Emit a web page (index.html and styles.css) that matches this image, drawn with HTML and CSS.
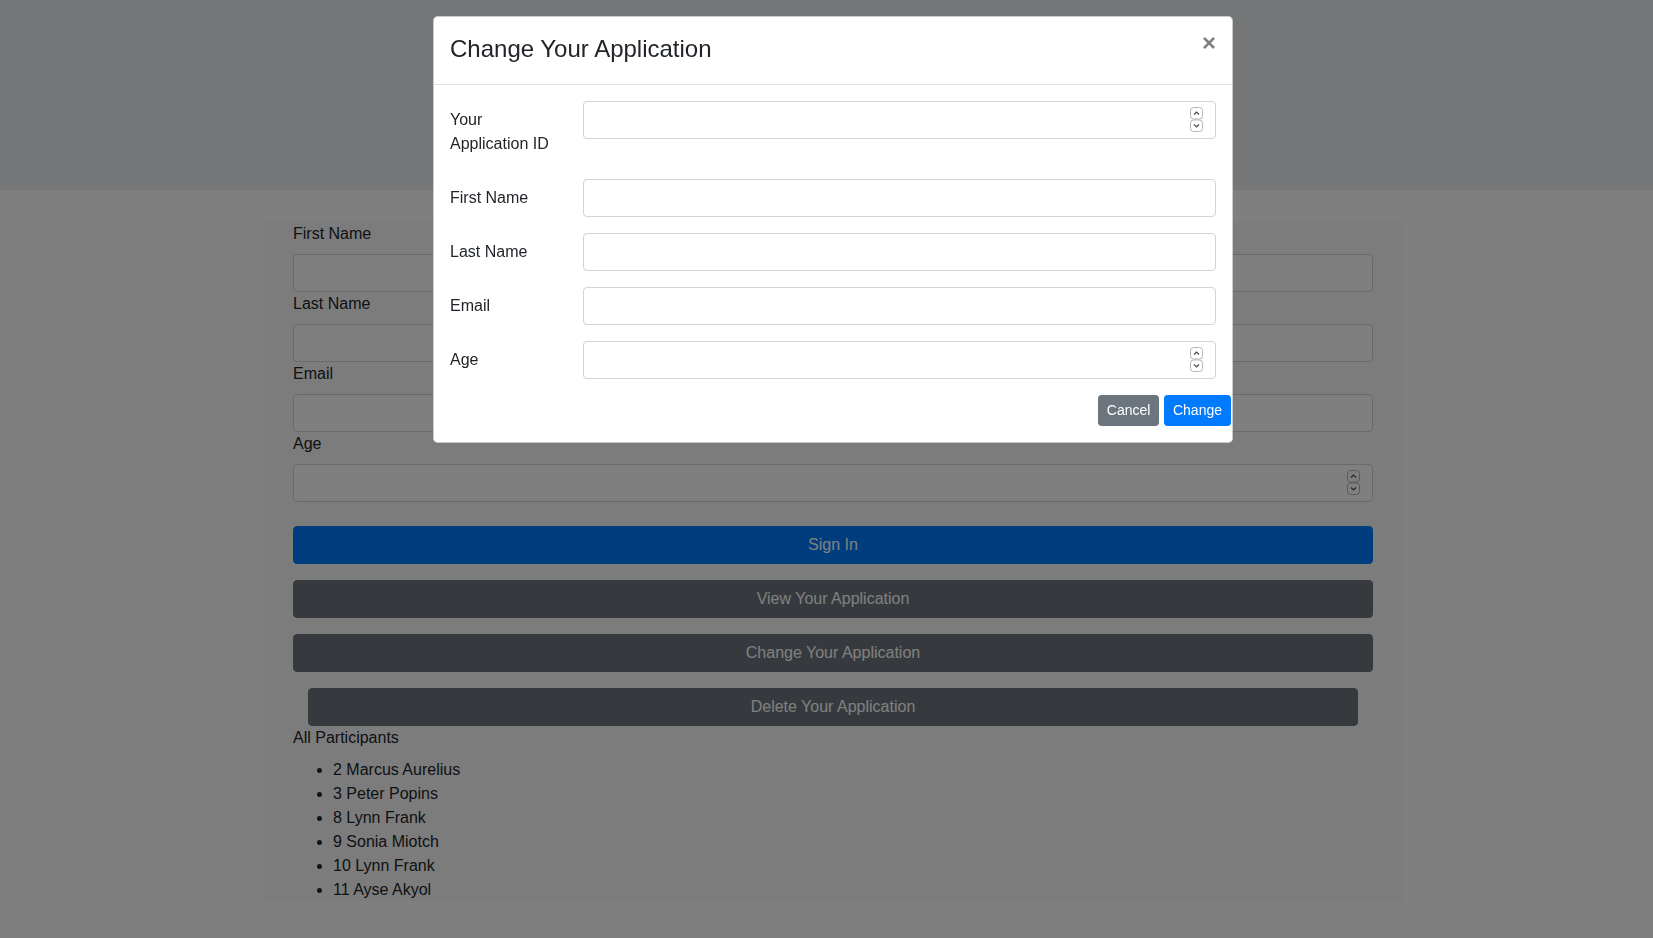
FILE: index.html
```html
<!DOCTYPE html>
<html lang="en">
<head>
<meta charset="utf-8">
<title>Applications</title>
<link rel="stylesheet" href="styles.css">
</head>
<body>
<div class="hero"></div>
<div class="page">
  <div class="container">
    <form class="signup">
      <label class="field-label">First Name</label>
      <input class="form-control" type="text">
      <label class="field-label">Last Name</label>
      <input class="form-control" type="text">
      <label class="field-label">Email</label>
      <input class="form-control" type="text">
      <label class="field-label">Age</label>
      <div class="num-wrap">
        <input class="form-control" type="number">
        <svg class="spin" width="13" height="25" viewBox="0 0 13 25" aria-hidden="true">
          <rect x="0.5" y="0.5" width="12" height="11.5" rx="3" fill="#fff" stroke="#b5b5b5"/>
          <polyline points="4,7.5 6.5,5 9,7.5" fill="none" stroke="#4a4a4a" stroke-width="1.2"/>
          <rect x="0.5" y="13" width="12" height="11.5" rx="3" fill="#fff" stroke="#b5b5b5"/>
          <polyline points="4,17.5 6.5,20 9,17.5" fill="none" stroke="#4a4a4a" stroke-width="1.2"/>
        </svg>
      </div>
      <div class="actions">
        <button type="button" class="btn btn-block btn-primary">Sign In</button>
        <button type="button" class="btn btn-block btn-secondary">View Your Application</button>
        <button type="button" class="btn btn-block btn-secondary">Change Your Application</button>
        <button type="button" class="btn btn-block btn-secondary btn-inset">Delete Your Application</button>
      </div>
    </form>
    <div class="list-title">All Participants</div>
    <ul class="participants">
      <li>2 Marcus Aurelius</li>
      <li>3 Peter Popins</li>
      <li>8 Lynn Frank</li>
      <li>9 Sonia Miotch</li>
      <li>10 Lynn Frank</li>
      <li>11 Ayse Akyol</li>
    </ul>
  </div>
</div>

<div class="backdrop">
  <div class="modal">
    <div class="modal-header">
      <h4 class="modal-title">Change Your Application</h4>
      <span class="close">&times;</span>
    </div>
    <div class="modal-body">
      <div class="form-row">
        <label class="row-label">Your Application ID</label>
        <div class="num-wrap">
          <input class="form-control" type="number">
          <svg class="spin" width="13" height="25" viewBox="0 0 13 25" aria-hidden="true">
            <rect x="0.5" y="0.5" width="12" height="11.5" rx="3" fill="#fff" stroke="#b5b5b5"/>
            <polyline points="4,7.5 6.5,5 9,7.5" fill="none" stroke="#4a4a4a" stroke-width="1.2"/>
            <rect x="0.5" y="13" width="12" height="11.5" rx="3" fill="#fff" stroke="#b5b5b5"/>
            <polyline points="4,17.5 6.5,20 9,17.5" fill="none" stroke="#4a4a4a" stroke-width="1.2"/>
          </svg>
        </div>
      </div>
      <div class="form-row">
        <label class="row-label">First Name</label>
        <input class="form-control" type="text">
      </div>
      <div class="form-row">
        <label class="row-label">Last Name</label>
        <input class="form-control" type="text">
      </div>
      <div class="form-row">
        <label class="row-label">Email</label>
        <input class="form-control" type="text">
      </div>
      <div class="form-row">
        <label class="row-label">Age</label>
        <div class="num-wrap">
          <input class="form-control" type="number">
          <svg class="spin" width="13" height="25" viewBox="0 0 13 25" aria-hidden="true">
            <rect x="0.5" y="0.5" width="12" height="11.5" rx="3" fill="#fff" stroke="#b5b5b5"/>
            <polyline points="4,7.5 6.5,5 9,7.5" fill="none" stroke="#4a4a4a" stroke-width="1.2"/>
            <rect x="0.5" y="13" width="12" height="11.5" rx="3" fill="#fff" stroke="#b5b5b5"/>
            <polyline points="4,17.5 6.5,20 9,17.5" fill="none" stroke="#4a4a4a" stroke-width="1.2"/>
          </svg>
        </div>
      </div>
      <div class="modal-actions">
        <button type="button" class="btn btn-sm btn-secondary">Cancel</button>
        <button type="button" class="btn btn-sm btn-primary">Change</button>
      </div>
    </div>
  </div>
</div>
</body>
</html>
```

FILE: styles.css
```css
* { box-sizing: border-box; }

html, body {
  margin: 0;
  padding: 0;
}

body {
  font-family: "Liberation Sans", Arial, Helvetica, sans-serif;
  font-size: 16px;
  line-height: 1.5;
  color: #212529;
  background: #fff;
  height: 938px;
  overflow: hidden;
}

.hero {
  height: 190px;
  background: #e9ecef;
}

.page {
  padding-left: 13px;
}

.container {
  width: 1140px;
  margin: 32px auto 0;
  background: #f8f9fa;
  padding: 0 30px;
}

.signup {
  display: flex;
  flex-direction: column;
}

.field-label {
  display: block;
  margin-bottom: 8px;
  line-height: 24px;
}

.form-control {
  display: block;
  width: 100%;
  height: 38px;
  padding: 6px 12px;
  font-family: inherit;
  font-size: 16px;
  line-height: 24px;
  color: #495057;
  background: #fff;
  border: 1px solid #ced4da;
  border-radius: 4px;
  margin: 0;
  -moz-appearance: textfield;
}

.form-control::-webkit-inner-spin-button,
.form-control::-webkit-outer-spin-button {
  -webkit-appearance: none;
  margin: 0;
}

.num-wrap {
  position: relative;
}

.spin {
  position: absolute;
  right: 13px;
  top: 6px;
  display: block;
}

.actions {
  display: flex;
  flex-direction: column;
  gap: 16px;
  margin-top: 24px;
}

.btn {
  display: inline-block;
  font-family: inherit;
  font-size: 16px;
  line-height: 24px;
  padding: 6px 12px;
  border: 1px solid transparent;
  border-radius: 4px;
  color: #fff;
  text-align: center;
  cursor: pointer;
}

.btn-block {
  width: 100%;
  height: 38px;
}

.btn-inset {
  width: auto;
  margin: 0 15px;
}

.btn-primary {
  background: #007bff;
  border-color: #007bff;
}

.btn-secondary {
  background: #6c757d;
  border-color: #6c757d;
}

.btn-sm {
  font-size: 14px;
  line-height: 21px;
  padding: 4px 8px;
  border-radius: 3.2px;
}

.list-title {
  line-height: 24px;
  margin-bottom: 8px;
}

.participants {
  margin: 0;
  padding-left: 40px;
  line-height: 24px;
}

/* modal */
.backdrop {
  position: fixed;
  inset: 0;
  background: rgba(0, 0, 0, 0.5);
  display: flex;
  justify-content: center;
  align-items: flex-start;
  padding: 16px 0 0 13px;
}

.modal {
  width: 800px;
  background: #fff;
  border: 1px solid rgba(0, 0, 0, 0.2);
  border-radius: 4.8px;
}

.modal-header {
  display: flex;
  justify-content: space-between;
  align-items: flex-start;
  padding: 14px 16px 17px;
  border-bottom: 1px solid #dee2e6;
}

.modal-title {
  margin: 0;
  font-size: 24px;
  font-weight: 400;
  line-height: 36px;
}

.close {
  font-size: 24px;
  font-weight: 700;
  line-height: 24px;
  color: #000;
  opacity: 0.5;
}

.modal-body {
  padding: 16px;
}

.form-row {
  display: grid;
  grid-template-columns: 132.67px 1fr;
  align-items: start;
  margin-bottom: 16px;
}

.row-label {
  padding: 7px 30px 7px 0;
  line-height: 24px;
}

.modal-actions {
  display: flex;
  justify-content: flex-end;
  gap: 4.5px;
  margin-right: -15px;
}
```
